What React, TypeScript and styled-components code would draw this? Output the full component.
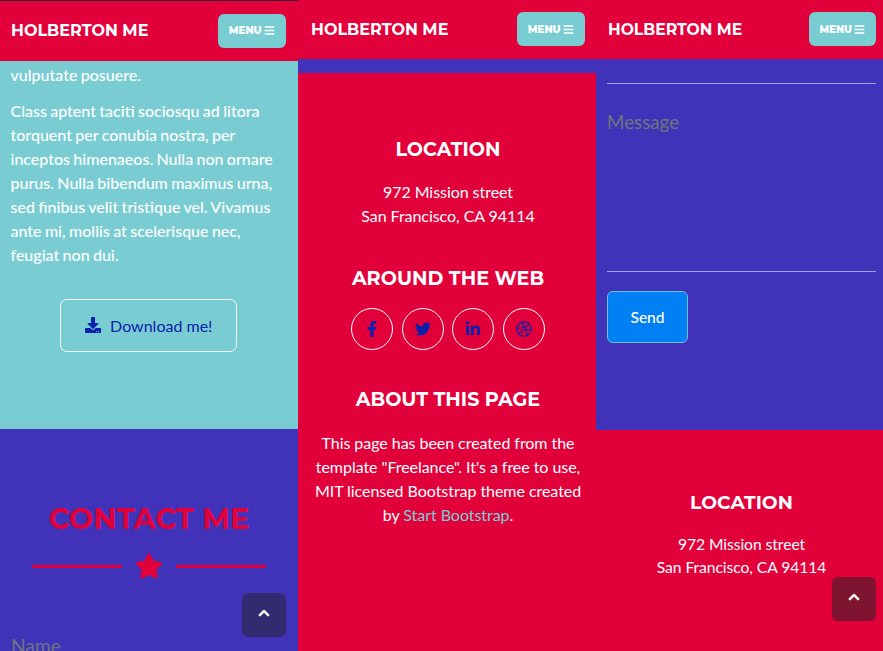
import React from 'react';
import styled, { createGlobalStyle } from 'styled-components';
import {
  FaBars,
  FaChevronUp,
  FaDownload,
  FaDribbble,
  FaFacebookF,
  FaLinkedinIn,
  FaStar,
  FaTwitter,
} from 'react-icons/fa';

const red = '#e2003b';
const teal = '#79cdd2';
const purple = '#4133b9';
const navy = '#0b21ad';

const GlobalStyle = createGlobalStyle`
  *, *::before, *::after { box-sizing: border-box; }
  body {
    margin: 0;
    overflow: hidden;
    font-family: Lato, 'Liberation Sans', sans-serif;
  }
  h2, h4, p { margin: 0; }
`;

const Page = styled.main`
  display: grid;
  grid-template-columns: 298px 298px 287px;
  width: 883px;
  height: 651px;
  overflow: hidden;
`;

const Phone = styled.section<{ $size?: number; $bg: string }>`
  position: relative;
  display: flex;
  flex-direction: column;
  min-width: 0;
  height: 651px;
  overflow: hidden;
  font-size: ${(p) => p.$size ?? 16}px;
  line-height: 1.5;
  color: #fff;
  background: ${(p) => p.$bg};
`;

const Navbar = styled.header<{ $height: number; $left: number; $right: number; $edge?: boolean }>`
  display: flex;
  flex: none;
  align-items: center;
  justify-content: space-between;
  height: ${(p) => p.$height}px;
  padding: 0 ${(p) => p.$right}px 1px ${(p) => p.$left}px;
  border-top: ${(p) => (p.$edge ? '1px solid #3b1c2a' : '0')};
  background: ${red};
`;

const Brand = styled.span`
  font: 700 1em Montserrat, Inter, sans-serif;
  white-space: nowrap;
`;

const MenuButton = styled.button<{ $width: number }>`
  display: flex;
  align-items: center;
  justify-content: center;
  gap: 2.5px;
  width: ${(p) => p.$width}px;
  height: 34px;
  padding: 0;
  border: 0;
  border-radius: 6px;
  font: 800 ${(p) => p.$width * 0.15}px Montserrat, Inter, sans-serif;
  color: #fff;
  background: ${teal};
`;

const About = styled.section`
  display: flex;
  flex: none;
  flex-direction: column;
  height: 368px;
  padding: 2px 0 0 10.5px;
  background: ${teal};
`;

const Copy = styled.p<{ $gap?: number }>`
  margin-top: ${(p) => p.$gap ?? 0}px;
  white-space: nowrap;
  font-weight: 500;
  word-spacing: -0.7px;
`;

const DownloadButton = styled.button`
  display: flex;
  align-items: center;
  align-self: center;
  justify-content: center;
  gap: 9px;
  width: 177px;
  height: 53px;
  margin: 32px 11px 0 0;
  padding: 0 0 1px;
  border: 1.5px solid #f4fbfc;
  border-radius: 7px;
  font: 400 16px Lato, sans-serif;
  color: ${navy};
  background: transparent;
`;

const ContactHeading = styled.h2`
  margin-top: 70px;
  font: 700 29px/40px Montserrat, Inter, sans-serif;
  text-align: center;
  white-space: nowrap;
  color: ${red};
`;

const Divider = styled.div`
  display: flex;
  align-items: center;
  justify-content: center;
  gap: 13px;
  height: 29px;
  margin-top: 13px;
  color: ${red};
`;

const Rule = styled.span`
  width: 90px;
  height: 3px;
  border-radius: 1px;
  background: ${red};
`;

const Placeholder = styled.div<{ $top: number; $left: number }>`
  margin: ${(p) => p.$top}px 0 0 ${(p) => p.$left}px;
  font-size: 1.2em;
  line-height: 24px;
  color: #6c757d;
`;

const ScrollTop = styled.button<{ $right: number; $bottom: number; $size: number; $bg: string }>`
  position: absolute;
  right: ${(p) => p.$right}px;
  bottom: ${(p) => p.$bottom}px;
  display: flex;
  align-items: center;
  justify-content: center;
  width: ${(p) => p.$size}px;
  height: ${(p) => p.$size}px;
  padding: 0 0 4px;
  border: 0;
  border-radius: 6px;
  color: #fff;
  background: ${(p) => p.$bg};

  svg {
    stroke: #fff;
    stroke-width: 32px;
  }
`;

const Footer = styled.footer<{ $top: number; $padTop: number; $shift: number }>`
  display: flex;
  flex: 1;
  flex-direction: column;
  margin-top: ${(p) => p.$top}px;
  padding: ${(p) => p.$padTop}px 0 0 ${(p) => p.$shift}px;
  text-align: center;
  background: ${red};
`;

const FooterHeading = styled.h4<{ $gap?: number }>`
  margin-top: ${(p) => p.$gap ?? 0}px;
  font: 700 1.2em/24px Montserrat, Inter, sans-serif;
  white-space: nowrap;
`;

const FooterText = styled.p<{ $gap: number }>`
  margin-top: ${(p) => p.$gap}px;
  line-height: 1.5;
  letter-spacing: -0.05px;
  white-space: nowrap;
`;

const CreditLink = styled.a`
  color: ${teal};
`;

const Socials = styled.nav`
  display: flex;
  justify-content: center;
  gap: 8.4px;
  margin-top: 18px;
`;

const SocialLink = styled.a`
  display: flex;
  align-items: center;
  justify-content: center;
  width: 42px;
  height: 42px;
  border: 1.5px solid #fff;
  border-radius: 50%;
  font-size: 16px;
  color: ${navy};
`;

const Field = styled.div<{ $height: number }>`
  height: ${(p) => p.$height}px;
  margin: 0 7px 0 11px;
  border-bottom: 1px solid #a59de0;
`;

const SendButton = styled.button`
  width: 81px;
  height: 52px;
  margin: 19px 0 0 11px;
  padding: 0 0 1px;
  border: 1.5px solid #68c4dc;
  border-radius: 6px;
  font: 500 15.65px Lato, sans-serif;
  letter-spacing: -0.1px;
  color: #fff;
  background: #0080f3;
`;

const Menu = ({ width = 68 }: { width?: number }) => (
  <MenuButton $width={width}>
    MENU <FaBars size={11} />
  </MenuButton>
);

const Address = ({ gap }: { gap: number }) => (
  <FooterText $gap={gap}>
    972 Mission street
    <br />
    San Francisco, CA 94114
  </FooterText>
);

export default function App() {
  return (
    <>
      <GlobalStyle />
      <Page>
        <Phone $bg={purple}>
          <Navbar $height={61} $left={11} $right={12} $edge>
            <Brand>HOLBERTON ME</Brand>
            <Menu />
          </Navbar>
          <About>
            <Copy>vulputate posuere.</Copy>
            <Copy $gap={12}>
              Class aptent taciti sociosqu ad litora
              <br />
              torquent per conubia nostra, per
              <br />
              inceptos himenaeos. Nulla non ornare
              <br />
              purus. Nulla bibendum maximus urna,
              <br />
              sed finibus velit tristique vel. Vivamus
              <br />
              ante mi, mollis at scelerisque nec,
              <br />
              feugiat non dui.
            </Copy>
            <DownloadButton>
              <FaDownload size={16} />
              Download me!
            </DownloadButton>
          </About>
          <ContactHeading>CONTACT ME</ContactHeading>
          <Divider>
            <Rule />
            <FaStar size={28} />
            <Rule />
          </Divider>
          <Placeholder $top={54} $left={11}>Name</Placeholder>
          <ScrollTop $right={12} $bottom={14} $size={44} $bg="#312b70">
            <FaChevronUp size={12} />
          </ScrollTop>
        </Phone>

        <Phone $bg={purple}>
          <Navbar $height={59} $left={13} $right={11}>
            <Brand>HOLBERTON ME</Brand>
            <Menu />
          </Navbar>
          <Footer $top={14} $padTop={64} $shift={2}>
            <FooterHeading>LOCATION</FooterHeading>
            <Address gap={19} />
            <FooterHeading $gap={38}>AROUND THE WEB</FooterHeading>
            <Socials>
              <SocialLink><FaFacebookF /></SocialLink>
              <SocialLink><FaTwitter /></SocialLink>
              <SocialLink><FaLinkedinIn /></SocialLink>
              <SocialLink><FaDribbble /></SocialLink>
            </Socials>
            <FooterHeading $gap={37}>ABOUT THIS PAGE</FooterHeading>
            <FooterText $gap={20}>
              This page has been created from the
              <br />
              template "Freelance". It's a free to use,
              <br />
              MIT licensed Bootstrap theme created
              <br />
              by <CreditLink>Start Bootstrap</CreditLink>.
            </FooterText>
          </Footer>
        </Phone>

        <Phone $bg={purple} $size={15.65}>
          <Navbar $height={59} $left={12} $right={7}>
            <Brand>HOLBERTON ME</Brand>
            <Menu width={67} />
          </Navbar>
          <Field $height={25} />
          <Field $height={188}>
            <Placeholder $top={26} $left={0}>Message</Placeholder>
          </Field>
          <SendButton>Send</SendButton>
          <Footer $top={87} $padTop={61} $shift={4}>
            <FooterHeading>LOCATION</FooterHeading>
            <Address gap={18} />
          </Footer>
          <ScrollTop $right={7} $bottom={30} $size={44} $bg="#7f1431">
            <FaChevronUp size={12} />
          </ScrollTop>
        </Phone>
      </Page>
    </>
  );
}
